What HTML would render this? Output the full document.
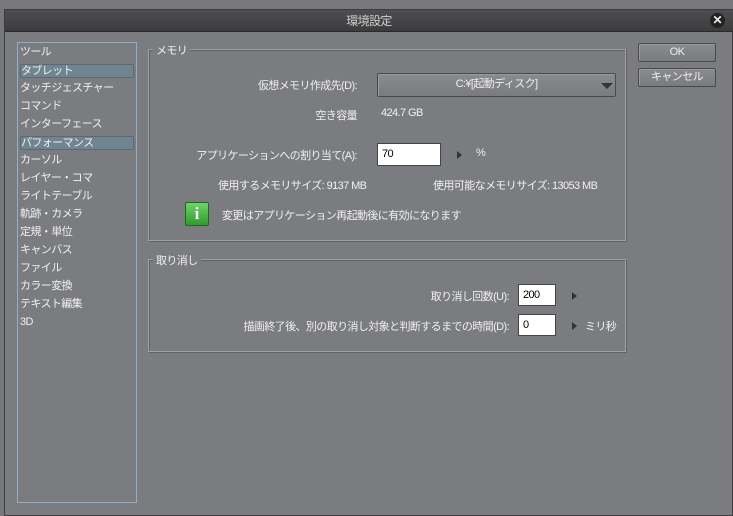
<!DOCTYPE html><html><head><meta charset="utf-8"><style>
*{margin:0;padding:0;box-sizing:border-box}
body{width:733px;height:516px;background:#77787c;font-family:"Liberation Sans","Noto Sans CJK JP",sans-serif;font-size:11px;color:#f0f0f0;position:relative;overflow:hidden;letter-spacing:-0.6px}
.a{position:absolute;white-space:nowrap}
#win{left:4px;top:9px;width:729px;height:507px;background:#7b7c80;border:1px solid #3c3c3e}
#title{left:5px;top:10px;width:728px;height:22px;background:linear-gradient(#4e4e50,#3c3c3e);border-bottom:1px solid #2a2a2c;text-align:center;line-height:22px;color:#cfcfcf;font-size:12px}
#list{left:17px;top:42px;width:120px;height:461px;border:1px solid #8fb0c8;background:#7b7c80}
.it{position:absolute;left:2px;height:14px;line-height:13px;width:114px;padding-left:0}
.sel{background:#6f8590;border-radius:2px;border:1px solid #5a6a72}
.grp{border:1px solid #a0a0a4;box-shadow:inset 1px 1px 0 #626266,1px 1px 0 #626266}
.lg{background:#7b7c80;padding:0 3px}
.btn{border:1px solid #4a4a4c;background:linear-gradient(#8a8b8f,#7a7b7f);border-radius:2px;text-align:center;color:#eee;box-shadow:inset 1px 1px 0 #9a9a9e}
.inp{background:#fff;color:#000;border:1px solid #444;padding-left:4px;line-height:20px}
.tri{width:0;height:0;border-left:5px solid #333;border-top:4px solid transparent;border-bottom:4px solid transparent}
</style></head><body>
<div class="a" id="win"></div>
<div class="a" id="title">環境設定</div>
<div class="a" style="left:710px;top:13px;width:15px;height:15px;border-radius:50%;background:#222;color:#eee;font-size:12px;font-weight:bold;text-align:center;line-height:15px;letter-spacing:0">✕</div>
<div class="a" id="list">
<div class="it" style="top:3px">ツール</div>
<div class="it sel" style="top:21px">タブレット</div>
<div class="it" style="top:39px">タッチジェスチャー</div>
<div class="it" style="top:57px">コマンド</div>
<div class="it" style="top:75px">インターフェース</div>
<div class="it sel" style="top:93px">パフォーマンス</div>
<div class="it" style="top:111px">カーソル</div>
<div class="it" style="top:129px">レイヤー・コマ</div>
<div class="it" style="top:147px">ライトテーブル</div>
<div class="it" style="top:165px">軌跡・カメラ</div>
<div class="it" style="top:183px">定規・単位</div>
<div class="it" style="top:201px">キャンバス</div>
<div class="it" style="top:219px">ファイル</div>
<div class="it" style="top:237px">カラー変換</div>
<div class="it" style="top:255px">テキスト編集</div>
<div class="it" style="top:273px">3D</div>
</div>
<div class="a grp" style="left:148px;top:49px;width:478px;height:192px"></div>
<div class="a lg" style="left:153px;top:42px">メモリ</div>
<div class="a" style="right:376px;top:77px">仮想メモリ作成先(D):</div>
<div class="a btn" style="left:377px;top:73px;width:239px;height:24px;line-height:21px">C:¥[起動ディスク]</div>
<div class="a" style="left:601px;top:83px;border-top:6px solid #333;border-left:6px solid transparent;border-right:6px solid transparent"></div>
<div class="a" style="right:376px;top:107px">空き容量</div>
<div class="a" style="left:381px;top:107px">424.7 GB</div>
<div class="a" style="right:376px;top:147px">アプリケーションへの割り当て(A):</div>
<div class="a inp" style="left:377px;top:143px;width:64px;height:23px">70</div>
<div class="a tri" style="left:457px;top:151px"></div>
<div class="a" style="left:476px;top:147px">%</div>
<div class="a" style="left:218px;top:177px">使用するメモリサイズ: 9137 MB</div>
<div class="a" style="left:433px;top:177px">使用可能なメモリサイズ: 13053 MB</div>
<div class="a" style="left:185px;top:202px;width:24px;height:24px;background:linear-gradient(#6fd46a,#2e9a2c);border:1px solid #1d6a1c;border-radius:2px;color:#fff;font-weight:bold;font-family:'Liberation Serif',serif;font-size:17px;text-align:center;line-height:22px;letter-spacing:0">i</div>
<div class="a" style="left:222px;top:207px">変更はアプリケーション再起動後に有効になります</div>
<div class="a grp" style="left:148px;top:259px;width:478px;height:93px"></div>
<div class="a lg" style="left:153px;top:252px">取り消し</div>
<div class="a" style="right:224px;top:288px">取り消し回数(U):</div>
<div class="a inp" style="left:518px;top:284px;width:38px;height:22px">200</div>
<div class="a tri" style="left:572px;top:292px"></div>
<div class="a" style="right:224px;top:318px">描画終了後、別の取り消し対象と判断するまでの時間(D):</div>
<div class="a inp" style="left:518px;top:314px;width:38px;height:22px">0</div>
<div class="a tri" style="left:572px;top:322px"></div>
<div class="a" style="left:585px;top:318px">ミリ秒</div>
<div class="a btn" style="left:638px;top:43px;width:78px;height:19px;line-height:17px">OK</div>
<div class="a btn" style="left:638px;top:68px;width:78px;height:19px;line-height:17px">キャンセル</div>
</body></html>
